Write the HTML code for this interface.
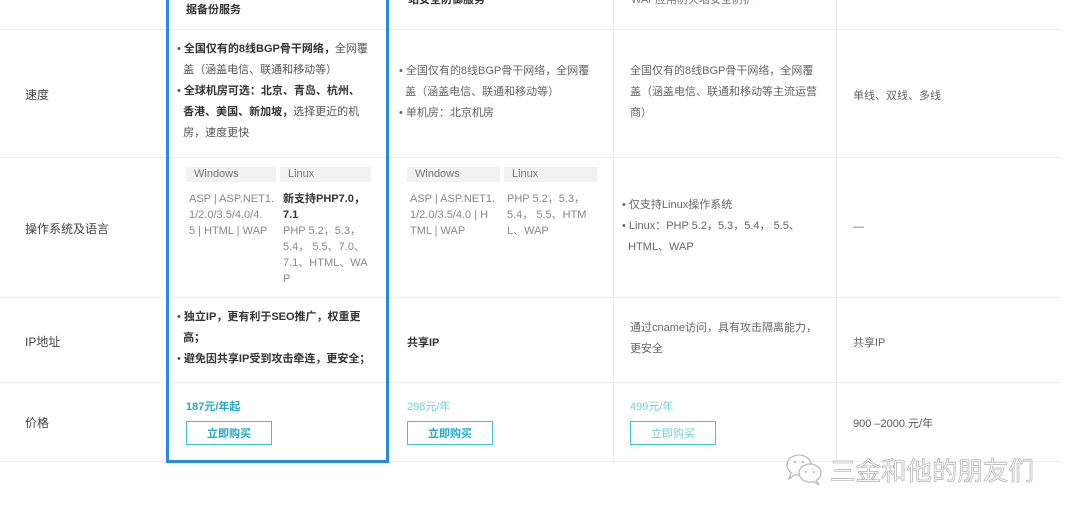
<!DOCTYPE html>
<html><head><meta charset="utf-8"><style>
body{margin:0;width:1080px;height:516px;background:#fff;position:relative;overflow:hidden;font-family:"Liberation Sans","Noto Sans CJK SC",sans-serif;color:#555;font-size:11px}
.a{position:absolute;white-space:nowrap}
.h{position:absolute;left:0;width:1060px;height:1px;background:#ececec}
.v{position:absolute;width:1px;background:#ececec}
.b{font-weight:bold;color:#333}
.lab{position:absolute;left:25px;font-size:12px;color:#444}
.tag{position:absolute;height:15px;background:#f2f2f2;color:#777;font-size:11px;line-height:15px;padding-left:8px;box-sizing:border-box}
.btn{position:absolute;width:86px;height:24px;border:1px solid #3bc3d6;color:#22a9c9;text-align:center;line-height:24px;font-size:11px;box-sizing:border-box}
.lh{line-height:21px}
</style></head><body>
<div class="h" style="top:29px"></div>
<div class="h" style="top:157px"></div>
<div class="h" style="top:297px"></div>
<div class="h" style="top:382px"></div>
<div class="h" style="top:461px"></div>
<div class="v" style="left:613px;top:0;height:461px"></div>
<div class="v" style="left:836px;top:0;height:461px"></div>
<div style="position:absolute;left:166px;top:-3px;width:223px;height:466px;border:3px solid #2a8ae0;box-sizing:border-box"></div>

<div class="a b" style="left:186px;top:1px">据备份服务</div>
<div class="a b" style="left:408px;top:-9px">站安全防御服务</div>
<div class="a" style="left:631px;top:-9px;color:#777">WAF应用防火墙安全防护</div>

<div class="lab" style="top:86px">速度</div>
<div class="a lh" style="left:177px;top:39px">• <span class="b">全国仅有的8线BGP骨干网络，</span>全网覆<br>&nbsp;&nbsp;盖（涵盖电信、联通和移动等）<br>• <span class="b">全球机房可选：北京、青岛、杭州、</span><br>&nbsp;&nbsp;<span class="b">香港、美国、新加坡，</span>选择更近的机<br>&nbsp;&nbsp;房，速度更快</div>
<div class="a lh" style="left:399px;top:61px;color:#666">• 全国仅有的8线BGP骨干网络，全网覆<br>&nbsp;&nbsp;盖（涵盖电信、联通和移动等）<br>• 单机房：北京机房</div>
<div class="a lh" style="left:630px;top:61px;color:#666">全国仅有的8线BGP骨干网络，全网覆<br>盖（涵盖电信、联通和移动等主流运营<br>商）</div>
<div class="a" style="left:853px;top:87px;color:#666">单线、双线、多线</div>

<div class="lab" style="top:220px">操作系统及语言</div>
<div class="tag" style="left:186px;top:167px;width:90px">Windows</div>
<div class="tag" style="left:280px;top:167px;width:91px">Linux</div>
<div class="a" style="left:189px;top:191px;line-height:16px;color:#888">ASP | ASP.NET1.<br>1/2.0/3.5/4.0/4.<br>5 | HTML | WAP</div>
<div class="a" style="left:283px;top:191px;line-height:16px;color:#888"><span class="b">新支持PHP7.0，<br>7.1</span><br>PHP 5.2，5.3，<br>5.4，&nbsp;5.5、7.0、<br>7.1、HTML、WA<br>P</div>
<div class="tag" style="left:407px;top:167px;width:93px">Windows</div>
<div class="tag" style="left:504px;top:167px;width:93px">Linux</div>
<div class="a" style="left:410px;top:191px;line-height:16px;color:#888">ASP | ASP.NET1.<br>1/2.0/3.5/4.0 | H<br>TML | WAP</div>
<div class="a" style="left:507px;top:191px;line-height:16px;color:#888">PHP 5.2，5.3，<br>5.4，&nbsp;5.5、HTM<br>L、WAP</div>
<div class="a lh" style="left:622px;top:195px;color:#666">• 仅支持Linux操作系统<br>• Linux：PHP 5.2，5.3，5.4，&nbsp;5.5、<br>&nbsp;&nbsp;HTML、WAP</div>
<div class="a" style="left:853px;top:221px;color:#666">—</div>

<div class="lab" style="top:333px">IP地址</div>
<div class="a lh" style="left:177px;top:307px">• <span class="b">独立IP，更有利于SEO推广，权重更</span><br>&nbsp;&nbsp;<span class="b">高；</span><br>• <span class="b">避免因共享IP受到攻击牵连，更安全；</span></div>
<div class="a b" style="left:407px;top:334px">共享IP</div>
<div class="a lh" style="left:630px;top:318px;color:#666">通过cname访问，具有攻击隔离能力，<br>更安全</div>
<div class="a" style="left:853px;top:334px;color:#666">共享IP</div>

<div class="lab" style="top:414px">价格</div>
<div class="a" style="left:186px;top:398px;color:#22a9c9;font-weight:bold">187元/年起</div>
<div class="btn" style="left:186px;top:421px;font-weight:bold">立即购买</div>
<div class="a" style="left:407px;top:398px;color:#6fd0e0">298元/年</div>
<div class="btn" style="left:407px;top:421px;font-weight:bold">立即购买</div>
<div class="a" style="left:630px;top:398px;color:#6fd0e0">499元/年</div>
<div class="btn" style="left:630px;top:421px;color:#6fd0e0">立即购买</div>
<div class="a" style="left:853px;top:415px;color:#555">900 –2000 元/年</div>

<svg class="a" style="left:785px;top:452px" width="40" height="36" viewBox="0 0 40 36"><g fill="#fff" stroke="#bbb" stroke-width="1.3"><ellipse cx="14" cy="13" rx="12" ry="10"/><path d="M6 21 L4 27 L11 22"/><ellipse cx="25" cy="21" rx="11" ry="9"/><path d="M31 28 L34 33 L28 29"/></g><g fill="#bbb"><circle cx="10" cy="10" r="1.2"/><circle cx="18" cy="10" r="1.2"/><circle cx="21" cy="20" r="1"/><circle cx="29" cy="20" r="1"/></g></svg>
<div class="a" style="left:830px;top:451px;font-size:25.5px;color:#fff;-webkit-text-stroke:0.7px #b0b0b0">三金和他的朋友们</div>
</body></html>
